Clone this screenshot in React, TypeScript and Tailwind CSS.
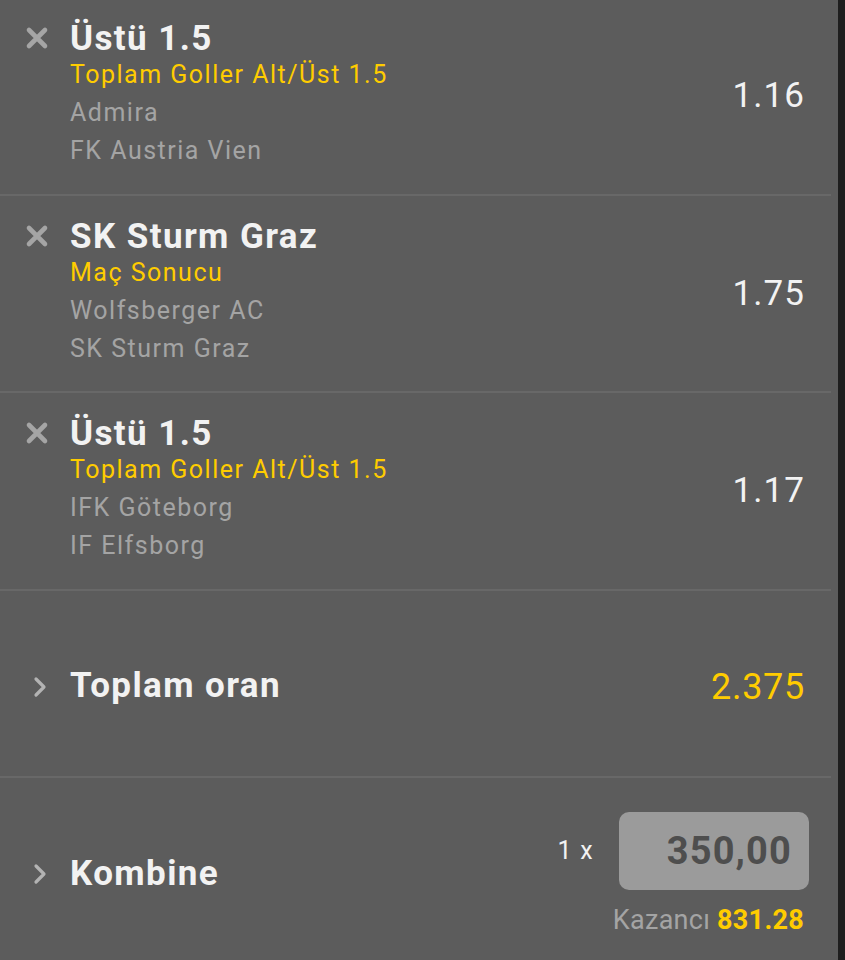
import React from 'react';

type Selection = {
  pick: string;
  market: string;
  home: string;
  away: string;
  odds: string;
};

const selections: Selection[] = [
  { pick: 'Üstü 1.5', market: 'Toplam Goller Alt/Üst 1.5', home: 'Admira', away: 'FK Austria Vien', odds: '1.16' },
  { pick: 'SK Sturm Graz', market: 'Maç Sonucu', home: 'Wolfsberger AC', away: 'SK Sturm Graz', odds: '1.75' },
  { pick: 'Üstü 1.5', market: 'Toplam Goller Alt/Üst 1.5', home: 'IFK Göteborg', away: 'IF Elfsborg', odds: '1.17' },
];

function CloseIcon() {
  return (
    <svg width="24" height="24" viewBox="0 0 24 24" className="block">
      <path d="M4 4 L20 20 M20 4 L4 20" stroke="#a5a5a5" strokeWidth="4.6" strokeLinecap="round" />
    </svg>
  );
}

function Chevron() {
  return (
    <svg width="14" height="22" viewBox="0 0 14 22" className="block">
      <path d="M3 3 L11 11 L3 19" fill="none" stroke="#b3b3b3" strokeWidth="3.2" strokeLinecap="round" strokeLinejoin="round" />
    </svg>
  );
}

function SelectionRow({ s }: { s: Selection }) {
  return (
    <div className="flex h-[198px] items-center border-b-2 border-[#686868] pr-[26px]">
      <div className="flex h-full flex-1 pt-[24px]">
        <div className="w-[71px] pl-[25px] pt-[4px]">
          <CloseIcon />
        </div>
        <div className="-ml-px flex flex-col">
          <div className="text-[35px] font-bold leading-[34px] tracking-[0.04em] text-[#f2f2f2]">{s.pick}</div>
          <div className="text-[25px] leading-[38px] tracking-[0.06em] text-[#ffcc00]">{s.market}</div>
          <div className="text-[25px] leading-[38px] tracking-[0.06em] text-[#a4a4a4]">{s.home}</div>
          <div className="text-[25px] leading-[38px] tracking-[0.06em] text-[#a4a4a4]">{s.away}</div>
        </div>
      </div>
      <div className="text-[35px] leading-none tracking-[0.03em] text-[#f2f2f2]">{s.odds}</div>
    </div>
  );
}

export default function App() {
  return (
    <div className="flex h-[960px] w-[845px] overflow-hidden bg-[#5c5c5c]" style={{ fontFamily: 'Roboto, "Liberation Sans", sans-serif' }}>
      <div className="-mt-[2px] flex w-[831px] flex-col">
        {selections.map((s, i) => (
          <SelectionRow key={i} s={s} />
        ))}

        <div className="flex h-[188px] items-center border-b-2 border-[#686868] pr-[26px] pt-[6px]">
          <div className="flex w-[71px] justify-end pr-[24px]">
            <Chevron />
          </div>
          <div className="-ml-px flex-1 text-[35px] font-bold tracking-[0.04em] text-[#f2f2f2]">Toplam oran</div>
          <div className="text-[36px] tracking-[0.02em] text-[#ffcc00]">2.375</div>
        </div>

        <div className="flex h-[182px] items-center pr-[22px] pt-[10px]">
          <div className="flex w-[71px] justify-end pr-[24px]">
            <Chevron />
          </div>
          <div className="-ml-px flex-1 text-[35px] font-bold tracking-[0.04em] text-[#f2f2f2]">Kombine</div>
          <div className="flex flex-col items-end">
            <div className="flex items-center gap-[25px]">
              <span className="text-[25px] tracking-[0.05em] text-[#f2f2f2]">1 x</span>
              <div className="flex h-[78px] w-[190px] items-center justify-end rounded-[10px] bg-[#9b9b9b] pr-[17px]">
                <span className="text-[38px] font-bold tracking-[0.03em] text-[#4e4e4e]">350,00</span>
              </div>
            </div>
            <div className="mt-[14px] pr-[5px] text-[27px] leading-[32px] tracking-[0.01em]">
              <span className="text-[#a4a4a4]">Kazancı </span>
              <span className="font-bold text-[#ffcc00]">831.28</span>
            </div>
          </div>
        </div>
      </div>
      <div className="w-[7px]" />
      <div className="w-[7px] bg-[#1e1e1e]" />
    </div>
  );
}
